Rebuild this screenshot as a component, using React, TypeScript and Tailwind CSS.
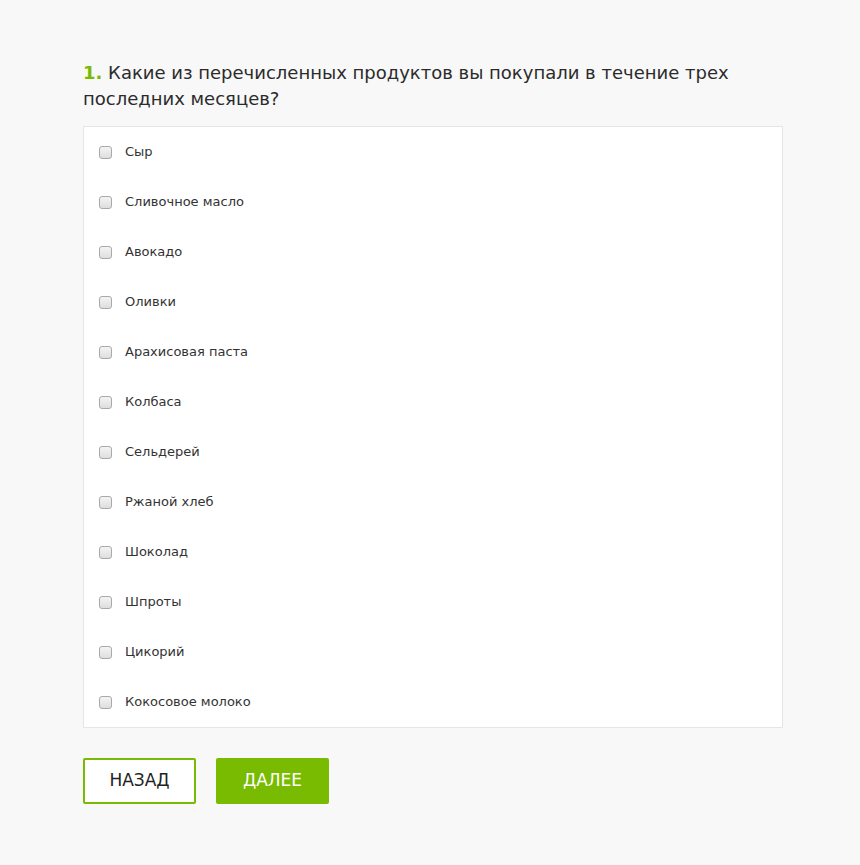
const items = [
  'Сыр',
  'Сливочное масло',
  'Авокадо',
  'Оливки',
  'Арахисовая паста',
  'Колбаса',
  'Сельдерей',
  'Ржаной хлеб',
  'Шоколад',
  'Шпроты',
  'Цикорий',
  'Кокосовое молоко',
];

const App = () => {
  return (
    <div className="min-h-[865px] bg-[#f8f8f8] font-['DejaVu_Sans',sans-serif] text-[#2b2b2b]">
      <div className="w-[700px] ml-[83px] pt-[60px]">
        <h2 className="text-[18px] leading-[26px] font-normal">
          <span className="text-[#78bb00] font-bold">1.</span> Какие из перечисленных продуктов вы покупали в течение трех последних месяцев?
        </h2>
        <div className="mt-[14px] bg-white border border-[#e6e6e6]">
          {items.map((item) => (
            <label key={item} className="flex items-center h-[50px] pl-[15px] cursor-pointer">
              <span className="w-[13px] h-[13px] rounded-[3px] border border-[#a9a9a9] bg-gradient-to-b from-[#f4f4f4] to-[#dedede]" />
              <span className="ml-[13px] text-[13px] text-[#333]">{item}</span>
            </label>
          ))}
        </div>
        <div className="flex gap-[20px] mt-[30px]">
          <button className="w-[113px] h-[46px] border-2 border-[#78bb00] rounded-[2px] bg-white text-[17px] text-[#222]">
            НАЗАД
          </button>
          <button className="w-[113px] h-[46px] rounded-[2px] bg-[#78bb00] text-[17px] text-white">
            ДАЛЕЕ
          </button>
        </div>
      </div>
    </div>
  );
};

export default App;
